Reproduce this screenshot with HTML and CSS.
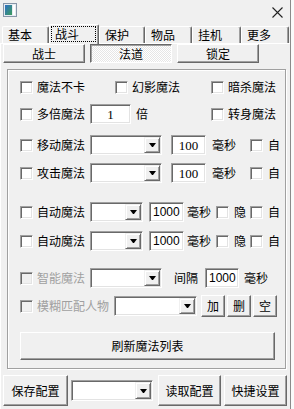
FILE: index.html
```html
<!DOCTYPE html>
<html lang="zh">
<head>
<meta charset="utf-8">
<title>魔法设置</title>
<link rel="stylesheet" href="styles.css">
</head>
<body>
<div class="window">
  <div class="titlebar">
    <svg class="appicon" width="14" height="14" viewBox="0 0 14 14">
      <defs>
        <linearGradient id="g" x1="0" y1="0" x2="1" y2="1">
          <stop offset="0" stop-color="#2d6fc4"/>
          <stop offset="1" stop-color="#3c9c5c"/>
        </linearGradient>
      </defs>
      <rect x="0.5" y="0.5" width="13" height="13" fill="#e6ecf2" stroke="#8796a8"/>
      <rect x="2" y="2" width="7" height="10" fill="url(#g)"/>
      <rect x="10" y="2" width="2" height="10" fill="#ffffff"/>
    </svg>
    <svg class="close" width="11" height="11" viewBox="0 0 11 11">
      <path d="M0.5 0.5 L10.5 10.5 M10.5 0.5 L0.5 10.5" stroke="#222" stroke-width="1.1" fill="none"/>
    </svg>
  </div>

  <div class="tabs">
    <div class="tab tw47">基本</div>
    <div class="tab tab-active tw50"><span class="focus">战斗</span></div>
    <div class="tab tw46">保护</div>
    <div class="tab tw47">物品</div>
    <div class="tab tw49">挂机</div>
    <div class="tab tw48">更多</div>
  </div>

  <div class="tabbody">
    <div class="subtabs">
      <div class="btn subtab">战士</div>
      <div class="btn subtab pressed">法道</div>
      <div class="btn subtab">锁定</div>
    </div>

    <div class="group">
      <div class="row grid3">
        <label class="chk"><span class="cb"></span><span>魔法不卡</span></label>
        <label class="chk"><span class="cb"></span><span>幻影魔法</span></label>
        <label class="chk"><span class="cb"></span><span>暗杀魔法</span></label>
      </div>

      <div class="row grid3 r2">
        <div class="wide">
          <label class="chk lbl"><span class="cb"></span><span>多倍魔法</span></label>
          <span class="field w41 serif center">1</span>
          <span class="ml5">倍</span>
        </div>
        <label class="chk"><span class="cb"></span><span>转身魔法</span></label>
      </div>

      <div class="row r3">
        <label class="chk lbl"><span class="cb"></span><span>移动魔法</span></label>
        <div class="combo w72"><span class="drop"><i class="arrow"></i></span></div>
        <span class="field w35 serif center ml9">100</span>
        <span class="ml6">毫秒</span>
        <span class="cb ml14"></span>
        <span class="ml5">自</span>
      </div>

      <div class="row r4">
        <label class="chk lbl"><span class="cb"></span><span>攻击魔法</span></label>
        <div class="combo w72"><span class="drop"><i class="arrow"></i></span></div>
        <span class="field w35 serif center ml9">100</span>
        <span class="ml6">毫秒</span>
        <span class="cb ml14"></span>
        <span class="ml5">自</span>
      </div>

      <div class="row r5">
        <label class="chk lbl"><span class="cb"></span><span>自动魔法</span></label>
        <div class="combo w53"><span class="drop"><i class="arrow"></i></span></div>
        <span class="field w35 sans ml6">1000</span>
        <span class="ml3">毫秒</span>
        <span class="cb ml5"></span>
        <span class="ml5">隐</span>
        <span class="cb ml4"></span>
        <span class="ml5">自</span>
      </div>

      <div class="row r6">
        <label class="chk lbl"><span class="cb"></span><span>自动魔法</span></label>
        <div class="combo w53"><span class="drop"><i class="arrow"></i></span></div>
        <span class="field w35 sans ml6">1000</span>
        <span class="ml3">毫秒</span>
        <span class="cb ml5"></span>
        <span class="ml5">隐</span>
        <span class="cb ml4"></span>
        <span class="ml5">自</span>
      </div>

      <div class="row r7">
        <label class="chk lbl disabled"><span class="cb off"></span><span>智能魔法</span></label>
        <div class="combo w72"><span class="drop"><i class="arrow"></i></span></div>
        <span class="ml12">间隔</span>
        <span class="field w34 sans ml7">1000</span>
        <span class="ml5">毫秒</span>
      </div>

      <div class="row r8">
        <label class="chk disabled"><span class="cb off"></span><span>模糊匹配人物</span></label>
        <div class="combo w83 ml5"><span class="drop"><i class="arrow"></i></span></div>
        <div class="btn small ml4">加</div>
        <div class="btn small ml2">删</div>
        <div class="btn small ml2">空</div>
      </div>

      <div class="btn refresh">刷新魔法列表</div>
    </div>

    <div class="bottombar">
      <div class="btn bigbtn w65">保存配置</div>
      <div class="combo w82 ml3 tall"><span class="drop"><i class="arrow"></i></span></div>
      <div class="btn bigbtn w63 ml5">读取配置</div>
      <div class="btn bigbtn w63 ml3">快捷设置</div>
    </div>
  </div>
</div>
</body>
</html>
```

FILE: styles.css
```css
html, body {
  margin: 0;
  padding: 0;
  background: #fafafa;
}

body {
  width: 294px;
  height: 409px;
  overflow: hidden;
  font-family: "Noto Sans CJK SC", "Noto Sans", sans-serif;
  font-size: 12px;
  line-height: 1;
  color: #000;
}

.window {
  width: 290px;
  height: 409px;
  background: #f0f0f0;
  border-right: 1px solid #8a8a8a;
}

/* title bar */
.titlebar {
  height: 23px;
  display: flex;
  align-items: flex-start;
  justify-content: space-between;
  box-sizing: border-box;
  padding: 3px 7px 0 3px;
}
.close {
  margin-top: 4px;
}

/* tabs */
.tabs {
  height: 20px;
  display: flex;
  align-items: flex-end;
  padding-left: 2px;
}
.tab {
  height: 17px;
  box-sizing: border-box;
  border-top: 1px solid #fff;
  border-left: 1px solid #fff;
  border-right: 1px solid #696969;
  box-shadow: inset -1px 0 #a0a0a0;
  border-radius: 2px 2px 0 0;
  padding-left: 5px;
  display: flex;
  align-items: center;
  font-size: 12px;
}
.tab-active {
  height: 20px;
  margin-bottom: -1px;
  position: relative;
  z-index: 1;
  background: #f0f0f0;
  padding: 1px 2px 2px 1px;
}
.focus {
  flex: 1;
  height: 100%;
  box-sizing: border-box;
  border: 1px dotted #000;
  display: flex;
  align-items: center;
  padding-left: 3px;
}
.tw46 { width: 46px; }
.tw47 { width: 47px; }
.tw48 { width: 48px; }
.tw49 { width: 49px; }
.tw50 { width: 50px; }

.tabbody {
  border-top: 1px solid #fff;
  border-left: 1px solid #fff;
  height: 366px;
}

/* generic 3D controls */
.btn {
  box-sizing: border-box;
  border: 1px solid;
  border-color: #fff #696969 #696969 #fff;
  box-shadow: inset -1px -1px #a0a0a0;
  background: #f0f0f0;
  display: flex;
  align-items: center;
  justify-content: center;
  flex: none;
}
.pressed {
  border-color: #696969 #fff #fff #696969;
  box-shadow: inset 1px 1px #a0a0a0;
  background-color: #f4f4f4;
  background-image: conic-gradient(#ffffff 25%, #e6e6e6 0 50%, #ffffff 0 75%, #e6e6e6 0);
  background-size: 2px 2px;
}

.subtabs {
  display: flex;
  padding-left: 2px;
  gap: 5px;
}
.subtab {
  width: 82px;
  height: 19px;
}

.cb {
  width: 13px;
  height: 13px;
  box-sizing: border-box;
  border: 1px solid;
  border-color: #a0a0a0 #fff #fff #a0a0a0;
  box-shadow: inset 1px 1px #696969, inset -1px -1px #e3e3e3;
  background: #fff;
  flex: none;
}
.cb.off {
  background: #f0f0f0;
}

.field {
  height: 20px;
  box-sizing: border-box;
  border: 1px solid;
  border-color: #a0a0a0 #fff #fff #a0a0a0;
  box-shadow: inset 1px 1px #696969, inset -1px -1px #e3e3e3;
  background: #fff;
  display: flex;
  align-items: center;
  padding-left: 3px;
  flex: none;
  color: #000;
}
.field.center {
  justify-content: center;
  padding-left: 0;
}
.serif {
  font-family: "Liberation Serif", serif;
  font-size: 13px;
}
.sans {
  font-family: "Liberation Sans", sans-serif;
  font-size: 12px;
}

.combo {
  height: 20px;
  box-sizing: border-box;
  border: 1px solid;
  border-color: #a0a0a0 #fff #fff #a0a0a0;
  box-shadow: inset 1px 1px #696969, inset -1px -1px #e3e3e3;
  background: #fff;
  display: flex;
  justify-content: flex-end;
  padding: 1px;
  flex: none;
}
.combo.tall {
  height: 21px;
}
.drop {
  width: 16px;
  box-sizing: border-box;
  border: 1px solid;
  border-color: #f0f0f0 #696969 #696969 #f0f0f0;
  box-shadow: inset 1px 1px #fff, inset -1px -1px #a0a0a0;
  background: #f0f0f0;
  display: flex;
  align-items: center;
  justify-content: center;
}
.arrow {
  width: 1px;
  height: 0;
  border-left: 3px solid transparent;
  border-right: 3px solid transparent;
  border-top: 4px solid #000;
}

/* group box */
.group {
  margin: 6px 0 0 6px;
  width: 279px;
  box-sizing: border-box;
  border: 1px solid #a0a0a0;
  box-shadow: inset 1px 1px #fff, 1px 1px #fff;
  padding: 7px 0 8px 12px;
}

.row {
  height: 20px;
  display: flex;
  align-items: center;
}
.grid3 {
  display: grid;
  grid-template-columns: 95px 96px auto;
  align-items: center;
}
.wide {
  grid-column: span 2;
  display: flex;
  align-items: center;
}
.chk {
  display: flex;
  align-items: center;
  gap: 4px;
}
.lbl {
  width: 70px;
  flex: none;
}
.chk.disabled {
  color: #a0a0a0;
}

.r2 { margin-top: 7px; }
.r3 { margin-top: 11px; }
.r4 { margin-top: 8px; }
.r5 { margin-top: 19px; }
.r6 { margin-top: 9px; }
.r7 { margin-top: 17px; }
.r8 { margin-top: 7px; height: 22px; }

.small {
  width: 24px;
  height: 22px;
}
.refresh {
  margin-top: 15px;
  width: 255px;
  height: 28px;
}

.bottombar {
  display: flex;
  align-items: center;
  margin-top: 6px;
  padding-left: 2px;
}
.bigbtn {
  height: 31px;
}

.w34 { width: 34px; }
.w35 { width: 35px; }
.w41 { width: 41px; }
.w53 { width: 53px; }
.w63 { width: 63px; }
.w65 { width: 65px; }
.w72 { width: 72px; }
.w82 { width: 82px; }
.w83 { width: 83px; }

.ml2 { margin-left: 2px; }
.ml3 { margin-left: 3px; }
.ml4 { margin-left: 4px; }
.ml5 { margin-left: 5px; }
.ml6 { margin-left: 6px; }
.ml7 { margin-left: 7px; }
.ml9 { margin-left: 9px; }
.ml12 { margin-left: 12px; }
.ml14 { margin-left: 14px; }
```
